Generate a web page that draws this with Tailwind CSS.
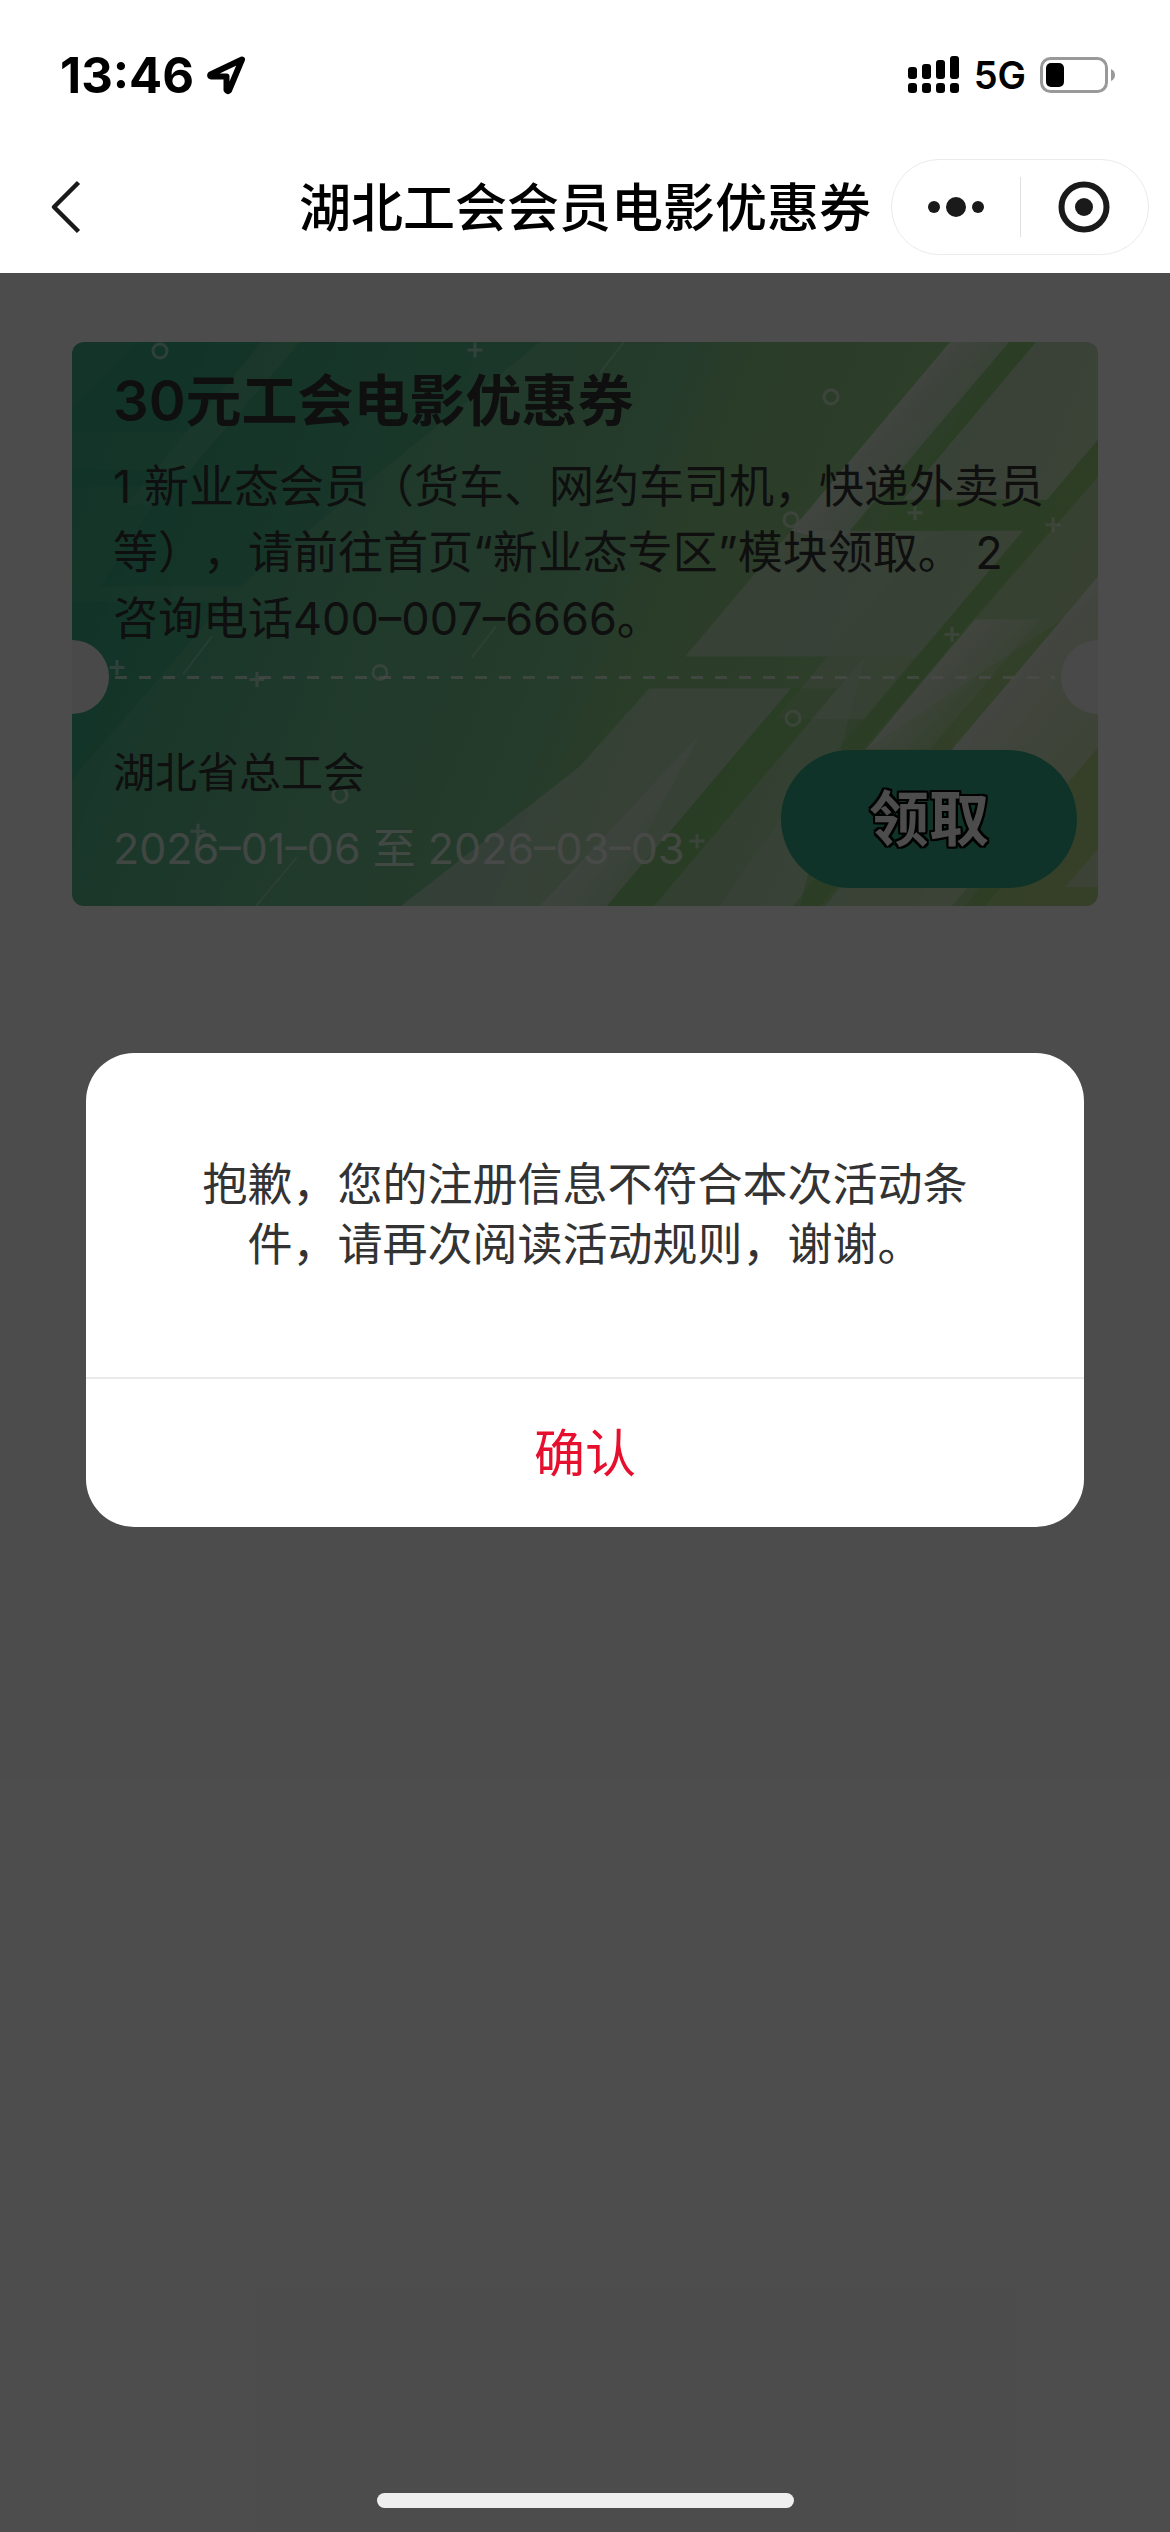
<!DOCTYPE html>
<html lang="zh-CN">
<head>
<meta charset="utf-8">
<meta name="viewport" content="width=device-width, initial-scale=1">
<title>湖北工会会员电影优惠券</title>
<script src="https://cdn.jsdelivr.net/npm/@tailwindcss/browser@4"></script>
</head>
<body class="flex min-h-screen flex-col bg-white font-['Inter','Noto_Sans_CJK_SC',sans-serif] text-black">

<header class="bg-white">
  <!-- Status bar -->
  <div class="flex h-[150px] items-center justify-between pr-[54px] pl-[60px]">
    <div class="flex items-center gap-3">
      <span class="text-[49px] leading-none font-bold">13:46</span>
      <svg class="h-10 w-10" viewBox="0 0 40 40" fill="none" stroke="#000" stroke-width="6" stroke-linejoin="round" aria-hidden="true">
        <path d="M36 4.500L4.500 19.500Q3.500 21 5 21.500L20.500 21.500L20.500 35Q21.500 37 23 35.500Z"/>
      </svg>
    </div>
    <div class="flex items-center gap-[14px]">
      <svg class="h-[38px] w-[52px]" viewBox="0 0 52 38" aria-hidden="true">
        <rect x="0" y="11" width="9" height="12" rx="3"/><rect x="14" y="8" width="9" height="15" rx="3"/><rect x="28" y="4" width="9" height="19" rx="3"/><rect x="42" y="0" width="9" height="23" rx="3"/>
        <rect x="0" y="27" width="9" height="10" rx="3"/><rect x="14" y="27" width="9" height="10" rx="3"/><rect x="28" y="27" width="9" height="10" rx="3"/><rect x="42" y="27" width="9" height="10" rx="3"/>
      </svg>
      <span class="text-[38px] leading-none font-semibold">5G</span>
      <svg class="h-[38px] w-[76px]" viewBox="0 0 76 38" aria-hidden="true">
        <rect x="1.500" y="2.500" width="65" height="33" rx="9" fill="none" stroke="#999" stroke-width="3"/>
        <path d="M71 13Q75 15 75 19Q75 23 71 25Z" fill="#999"/>
        <rect x="6" y="7" width="18" height="24" rx="5"/>
      </svg>
    </div>
  </div>
  <!-- Navigation bar -->
  <div class="grid h-[123px] grid-cols-[1fr_auto_1fr] items-center pr-[21px] pb-[9px] pl-[45px]">
    <button type="button" aria-label="返回" class="h-[60px] w-[45px]">
      <svg class="h-[60px] w-[45px]" viewBox="0 0 45 60" fill="none" stroke="#1a1a1a" stroke-width="4.500" aria-hidden="true"><path d="M33.500 5.500L9 30L33.500 54.500" stroke-linejoin="round"/></svg>
    </button>
    <h1 class="-ml-6 pt-[3px] text-[52px] leading-[60px] font-medium">湖北工会会员电影优惠券</h1>
    <div class="flex h-24 w-[258px] items-center justify-self-end rounded-full border border-[#ebebeb]">
      <button type="button" aria-label="更多" class="flex flex-1 justify-center">
        <svg class="h-[60px] w-[60px]" viewBox="0 0 60 60" fill="#1a1a1a" aria-hidden="true"><circle cx="8" cy="30" r="6"/><circle cx="30" cy="30" r="10"/><circle cx="52" cy="30" r="6"/></svg>
      </button>
      <span class="h-[60px] w-px bg-[#e0e0e0]"></span>
      <button type="button" aria-label="关闭" class="flex flex-1 justify-center">
        <svg class="h-[60px] w-[60px]" viewBox="0 0 60 60" fill="#1a1a1a" aria-hidden="true"><circle cx="30" cy="30" r="22.500" fill="none" stroke="#1a1a1a" stroke-width="6"/><circle cx="30" cy="30" r="9"/></svg>
      </button>
    </div>
  </div>
</header>

<main class="relative flex-1 px-[72px] pt-[69px]">
  <!-- Coupon -->
  <article class="relative isolate overflow-hidden rounded-xl text-[#333]">
    <svg class="absolute inset-0 -z-10 h-full w-full" viewBox="72 342 1026 565" preserveAspectRatio="none" aria-hidden="true">
      <defs>
        <linearGradient id="base" gradientUnits="userSpaceOnUse" x1="100" y1="450" x2="1060" y2="820">
          <stop offset="0" stop-color="#44b08b"/><stop offset=".25" stop-color="#66bf8f"/><stop offset=".5" stop-color="#7ec68f"/><stop offset=".56" stop-color="#8ccb88"/><stop offset=".75" stop-color="#99d08c"/><stop offset="1" stop-color="#b4d888"/>
        </linearGradient>
        <linearGradient id="shine" gradientUnits="userSpaceOnUse" x1="856" y1="455" x2="920" y2="509">
          <stop offset="0" stop-color="#f2f0f2" stop-opacity=".7"/><stop offset=".4" stop-color="#f2f0f2" stop-opacity=".5"/><stop offset="1" stop-color="#f2f0f2" stop-opacity=".05"/>
        </linearGradient>
        <linearGradient id="shine2" gradientUnits="userSpaceOnUse" x1="920" y1="685" x2="970" y2="727">
          <stop offset="0" stop-color="#f2f0f2" stop-opacity=".6"/><stop offset="1" stop-color="#f2f0f2" stop-opacity=".05"/>
        </linearGradient>
        <linearGradient id="shine3" gradientUnits="userSpaceOnUse" x1="1010" y1="680" x2="1090" y2="747">
          <stop offset="0" stop-color="#f2f0f2" stop-opacity=".75"/><stop offset="1" stop-color="#e4ece0" stop-opacity=".5"/>
        </linearGradient>
        <linearGradient id="shine4" gradientUnits="userSpaceOnUse" x1="560" y1="870" x2="610" y2="912">
          <stop offset="0" stop-color="#f2f0f2" stop-opacity=".45"/><stop offset="1" stop-color="#f2f0f2" stop-opacity="0"/>
        </linearGradient>
      </defs>
      <rect x="72" y="342" width="1026" height="565" fill="url(#base)"/>
      <!-- slanted bands, left side -->
      <g fill="#1fa07c" fill-opacity=".28">
        <path d="M140 342H262L186 432H72V410Z"/>
        <path d="M300 342H540L240 587H100L165 487H72V470H190Z"/>
        <path d="M72 602H225L72 780Z"/>
      </g>
      <g fill="#fff" fill-opacity=".05">
        <path d="M262 342H300L160 505H126Z"/>
      </g>
      <!-- slanted bands, right side -->
      <g fill="#dfe8e2">
        <path d="M1036 342H1098V440L1047 500H903Z" fill-opacity=".55"/>
        <path d="M809 511L1009 342L903 500L877 531H1023L917 657H685Z" fill-opacity=".15"/>
        <path d="M791 531H934L828 657H685Z" fill-opacity=".42"/>
        <path d="M934 531H1023L865 720H775Z" fill-opacity=".35"/>
        <path d="M649 689H791L607 907H401L580 767Z" fill-opacity=".5"/>
        <path d="M865 657L800 907H654L840 687Z" fill-opacity=".3"/>
        <path d="M925 657L835 757L800 907H720L780 820Z" fill-opacity=".25"/>
        <path d="M1098 477V588L1062 620L866 750H862L975 620Z" fill-opacity=".3"/>
        <path d="M952 750L1072 779L965 907H825Z" fill-opacity=".5"/>
        <path d="M1098 850V888H1065Z" fill-opacity=".5"/>
      </g>
      <path d="M950 342H1009L840 543L791 531Z" fill="url(#shine)"/>
      <path d="M975 620H1040L930 750H866Z" fill="url(#shine2)"/>
      <path d="M1062 620L1098 577V748L1072 779L952 750Z" fill="url(#shine3)"/>
      <path d="M700 735L607 907H540Z" fill="url(#shine4)"/>
      <g fill="#80c86c" fill-opacity=".45">
        <path d="M1036 342H1009L875 500L850 531H1023L940 629L838 750H866L965 629L1098 477V440L1047 500H903Z"/>
        <path d="M607 907L791 689H837L654 907Z"/>
        <path d="M793 907L815 880H843L820 907Z"/>
        <path d="M952 907L975 880H1008L985 907Z"/>
      </g>
      <!-- hairlines -->
      <g fill="none" stroke="#fff" stroke-opacity=".25" stroke-width="2">
        <path d="M624 342L600 373M212 637L183 675M496 627L472 658M297 858L256 907"/>
      </g>
      <!-- confetti -->
      <g fill="none" stroke="#fff" stroke-opacity=".5" stroke-width="3">
        <circle cx="160" cy="351" r="7"/><circle cx="831" cy="397" r="7"/><circle cx="791" cy="520" r="7"/><circle cx="793" cy="719" r="7"/><circle cx="380" cy="673" r="7"/><circle cx="340" cy="796" r="7"/><circle cx="444" cy="477" r="7" stroke-opacity=".2"/>
        <path d="M467.500 350h15m-7.500-7.500v15M907.500 513h15m-7.500-7.500v15M1045.500 525h15m-7.500-7.500v15M944.500 635h15m-7.500-7.500v15M689.500 842h15m-7.500-7.500v15M109.500 668h15m-7.500-7.500v15M249.500 680h15m-7.500-7.500v15M190.500 832h15m-7.500-7.500v15"/>
      </g>
    </svg>

    <div class="pt-[19px] pl-[41px]">
      <h2 class="text-[56px] leading-[80px] font-semibold">30元工会电影优惠券</h2>
      <p class="mt-[13px] text-[45px] leading-[66px] [text-spacing-trim:space-all]">1 新业态会员（货车、网约车司机，快递外卖员<br>等），请前往首页“新业态专区”模块领取。 2<br>咨询电话400–007–6666。</p>
    </div>

    <!-- Perforation -->
    <div class="relative flex h-[50px] items-center px-[43px]">
      <span class="absolute top-1/2 left-0 size-[74px] -translate-x-1/2 -translate-y-1/2 rounded-full bg-[#f5f5f5]"></span>
      <span class="h-[3px] flex-1 bg-[repeating-linear-gradient(90deg,#ffffffa6_0_12px,transparent_12px_24px)]"></span>
      <span class="absolute top-1/2 right-0 size-[74px] translate-x-1/2 -translate-y-1/2 rounded-full bg-[#f5f5f5]"></span>
    </div>

    <div class="flex items-end justify-between pt-[41px] pr-[21px] pb-[18px] pl-[41px]">
      <div class="flex flex-col gap-[15px] pb-[10px] leading-[60px]">
        <p class="text-[42px]">湖北省总工会</p>
        <p class="text-[43px] text-white/75">2026–01–06 至 2026–03–03</p>
      </div>
      <button type="button" class="h-[138px] w-[296px] rounded-full bg-[#35aa85] text-[60px] leading-none font-bold text-white [text-shadow:2px_0_#000,-2px_0_#000,0_2px_#000,0_-2px_#000,2px_2px_#000,-2px_2px_#000,2px_-2px_#000,-2px_-2px_#000]">领取</button>
    </div>
  </article>

  <!-- Dialog over the dimmed page -->
  <div class="absolute inset-0 flex flex-col items-center justify-between bg-black/70 px-[86px] pt-[780px] pb-6">
    <section role="alertdialog" aria-modal="true" aria-describedby="notice" class="w-full overflow-hidden rounded-[48px] bg-white">
      <p id="notice" class="px-[112px] py-[102px] text-center text-[45px] leading-[60px] text-[#333]">抱歉，您的注册信息不符合本次活动条件，请再次阅读活动规则，谢谢。</p>
      <button type="button" class="h-[150px] w-full border-t-2 border-[#ebebeb] text-[51px] leading-none text-[#e60f2d]">确认</button>
    </section>
    <div class="h-[15px] w-[417px] rounded-full bg-[#efefef]"></div>
  </div>
</main>
</body>
</html>
